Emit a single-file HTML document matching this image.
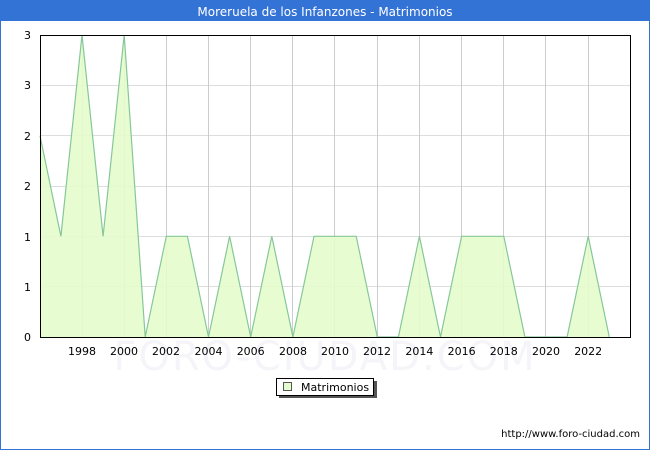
<!DOCTYPE html>
<html><head><meta charset="utf-8"><style>
html,body{margin:0;padding:0;background:#fff}
svg{display:block;font-family:"DejaVu Sans","Liberation Sans",sans-serif}
</style></head><body>
<svg width="650" height="450" xmlns="http://www.w3.org/2000/svg">
<rect x="0.5" y="0.5" width="649" height="449" fill="#fff" stroke="#3473d6"/>
<rect x="0" y="0" width="650" height="21" fill="#3473d6"/>
<text x="325" y="16" font-size="12" fill="#fff" text-anchor="middle">Moreruela de los Infanzones - Matrimonios</text>
<text x="325" y="370" font-size="40" fill="#f5f5f9" text-anchor="middle" letter-spacing="2">FORO-CIUDAD.COM</text>
<g stroke="#dddddd" stroke-width="1">
<line x1="40" y1="85.5" x2="630" y2="85.5"/><line x1="40" y1="135.5" x2="630" y2="135.5"/>
<line x1="40" y1="186.5" x2="630" y2="186.5"/><line x1="40" y1="236.5" x2="630" y2="236.5"/>
<line x1="40" y1="286.5" x2="630" y2="286.5"/>
</g>
<g stroke="#cccccc" stroke-width="1">
<line x1="82.5" y1="35" x2="82.5" y2="337"/><line x1="124.5" y1="35" x2="124.5" y2="337"/>
<line x1="166.5" y1="35" x2="166.5" y2="337"/><line x1="208.5" y1="35" x2="208.5" y2="337"/>
<line x1="250.5" y1="35" x2="250.5" y2="337"/><line x1="292.5" y1="35" x2="292.5" y2="337"/>
<line x1="334.5" y1="35" x2="334.5" y2="337"/><line x1="377.5" y1="35" x2="377.5" y2="337"/>
<line x1="419.5" y1="35" x2="419.5" y2="337"/><line x1="461.5" y1="35" x2="461.5" y2="337"/>
<line x1="503.5" y1="35" x2="503.5" y2="337"/><line x1="545.5" y1="35" x2="545.5" y2="337"/>
<line x1="588.5" y1="35" x2="588.5" y2="337"/>
</g>
<polygon fill="#e4fdcc" fill-opacity="0.9" stroke="none" points="40,337 40,135.7 60.9,236.3 82,35 103.1,236.3 124.2,35 145.2,337 166.3,236.3 187.4,236.3 208.5,337 229.6,236.3 250.7,337 271.8,236.3 292.9,337 314,236.3 335.1,236.3 356.2,236.3 377.3,337 398.4,337 419.4,236.3 440.5,337 461.6,236.3 482.7,236.3 503.8,236.3 524.9,337 546,337 567.1,337 588.2,236.3 609.3,337"/>
<polyline fill="none" stroke="#86c79a" stroke-width="1.2" points="40,135.7 60.9,236.3 82,35 103.1,236.3 124.2,35 145.2,337 166.3,236.3 187.4,236.3 208.5,337 229.6,236.3 250.7,337 271.8,236.3 292.9,337 314,236.3 335.1,236.3 356.2,236.3 377.3,337 398.4,337 419.4,236.3 440.5,337 461.6,236.3 482.7,236.3 503.8,236.3 524.9,337 546,337 567.1,337 588.2,236.3 609.3,337"/>
<rect x="40.5" y="35.5" width="590" height="302" fill="none" stroke="#000"/>
<g font-size="11" fill="#000" text-anchor="end">
<text x="31" y="39">3</text><text x="31" y="89">3</text><text x="31" y="140">2</text>
<text x="31" y="190">2</text><text x="31" y="241">1</text><text x="31" y="291">1</text><text x="31" y="341">0</text>
</g>
<g font-size="11" fill="#000" text-anchor="middle">
<text x="82" y="355">1998</text><text x="124" y="355">2000</text><text x="166" y="355">2002</text>
<text x="208.5" y="355">2004</text><text x="250.7" y="355">2006</text><text x="293" y="355">2008</text>
<text x="335" y="355">2010</text><text x="377" y="355">2012</text><text x="419.4" y="355">2014</text>
<text x="461.6" y="355">2016</text><text x="503.8" y="355">2018</text><text x="546" y="355">2020</text>
<text x="588.2" y="355">2022</text>
</g>
<rect x="279" y="381" width="98" height="17" fill="#555"/>
<rect x="276.5" y="378.5" width="97" height="17" fill="#fff" stroke="#000"/>
<rect x="283.5" y="382.5" width="8" height="8" fill="#e4fdcc" stroke="#555"/>
<text x="301" y="391" font-size="11" fill="#000">Matrimonios</text>
<text x="640" y="437" font-size="10" fill="#000" text-anchor="end">http://www.foro-ciudad.com</text>
</svg>
</body></html>
